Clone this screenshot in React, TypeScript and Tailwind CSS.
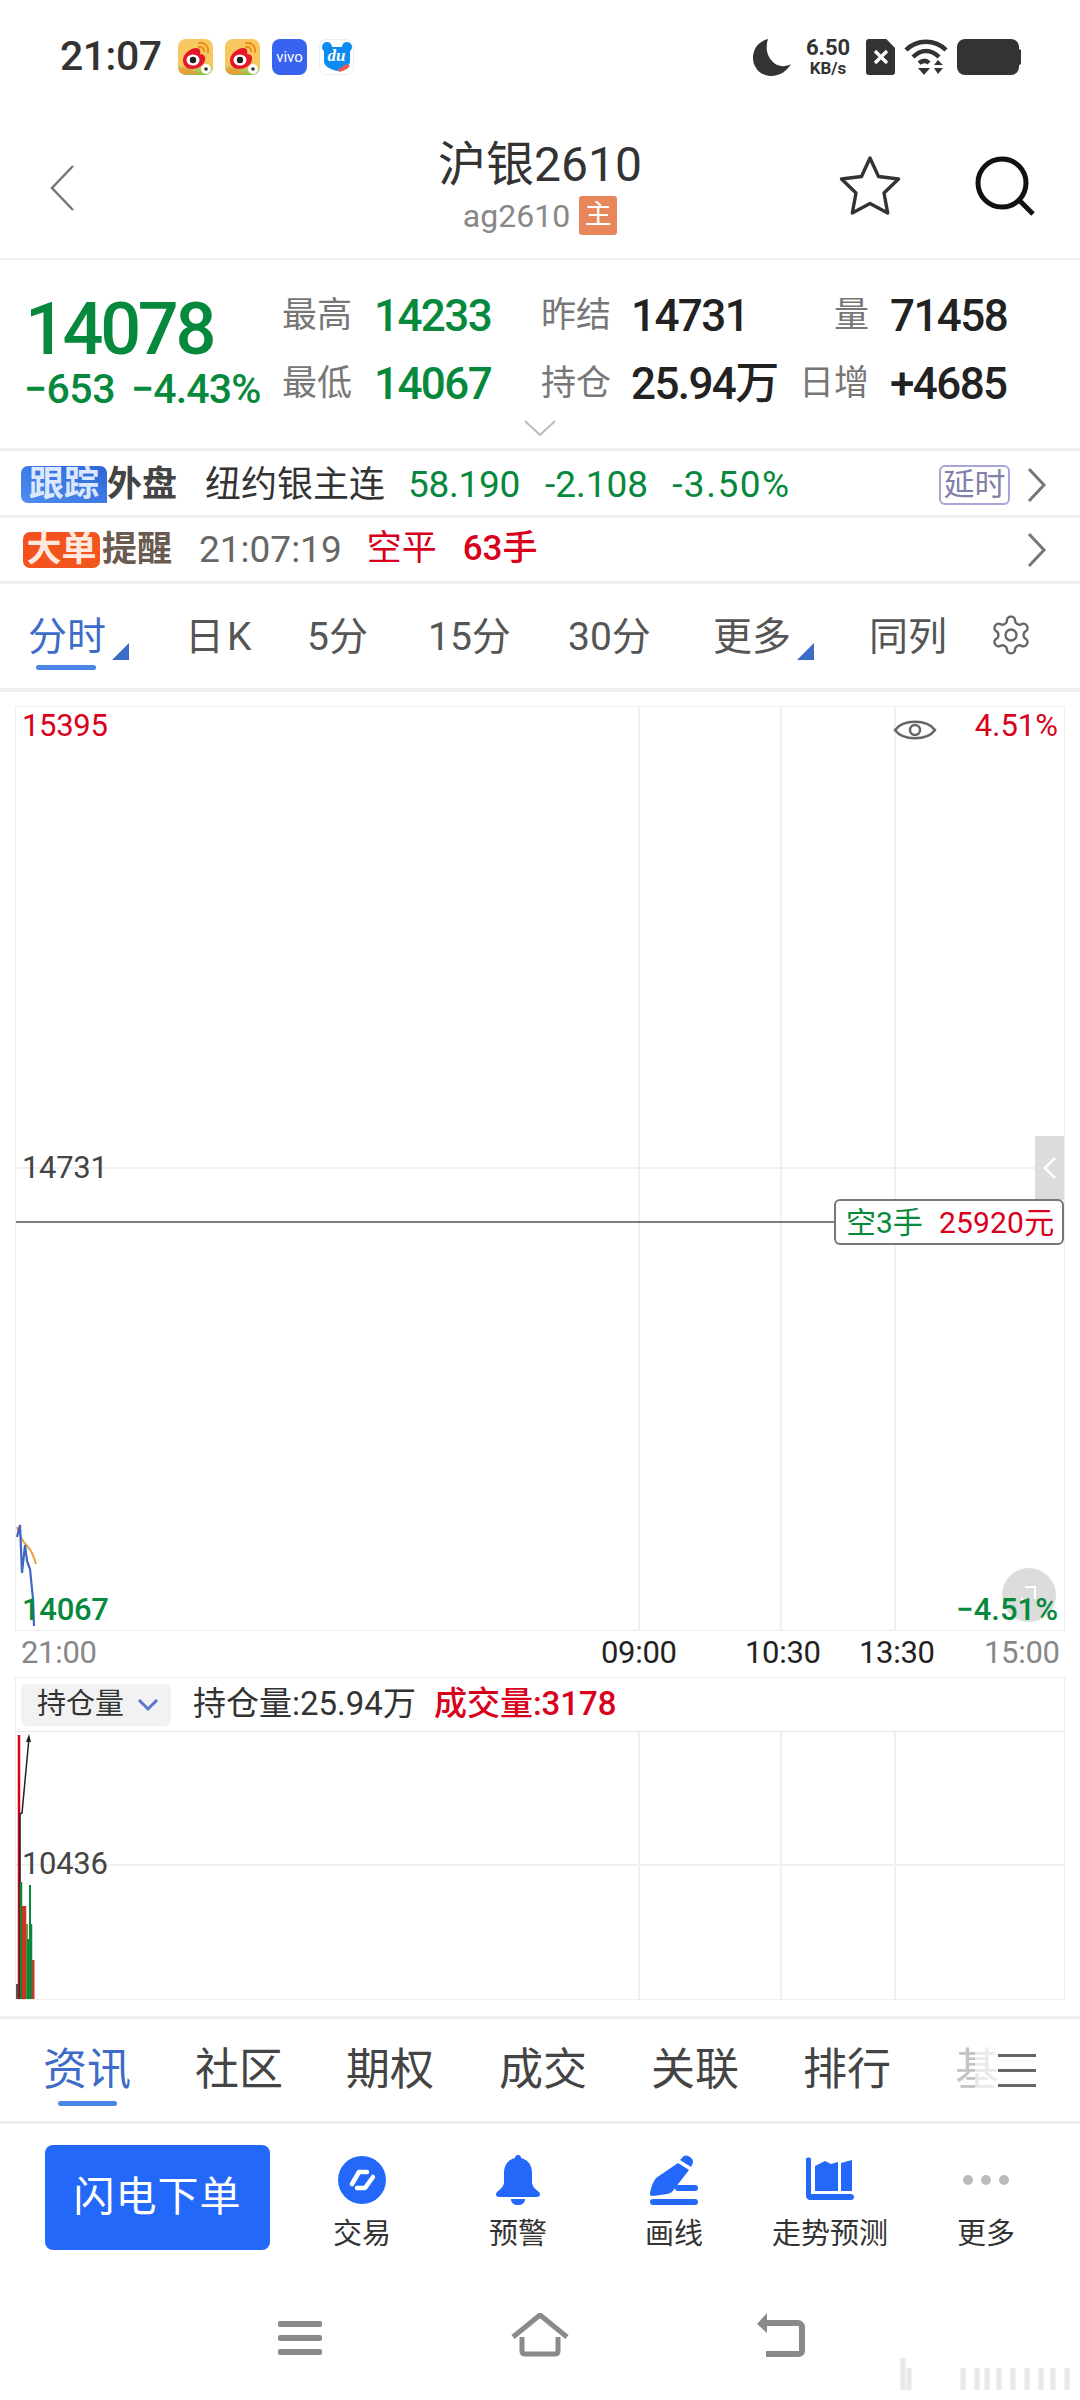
const GREEN = "text-[#07893d]";
const RED = "text-[#d9001b]";

function AppIcon({ kind }: { kind: "weibo" | "vivo" | "du" }) {
  if (kind === "vivo") {
    return (
      <div className="w-[35px] h-[36px] rounded-[8px] bg-[#3763f0] flex items-center justify-center text-white text-[15px] leading-none">
        vivo
      </div>
    );
  }
  if (kind === "du") {
    return (
      <div className="w-[35px] h-[36px] rounded-[8px] bg-white border border-[#e8eef5] flex items-center justify-center relative">
        <svg width="32" height="32" viewBox="0 0 32 32" className="absolute left-[1px] top-[1px]">
          <circle cx="6" cy="6" r="5" fill="#0c8bf0" />
          <circle cx="26" cy="6" r="5" fill="#0c8bf0" />
          <path d="M3 6h26v14c0 5-5 8-13 10C8 28 3 25 3 20z" fill="#0c8bf0" />
          <path d="M18 31c4-1 9-3 11-6l-3-2-9 5z" fill="#e65a4f" />
        </svg>
        <span className="relative text-white text-[17px] leading-none italic font-bold [font-family:'Liberation_Serif',serif] -mt-[3px]">du</span>
      </div>
    );
  }
  return (
    <div className="w-[35px] h-[36px] rounded-[8px] bg-gradient-to-b from-[#f8c860] from-70% to-[#7fc04a] flex items-center justify-center relative overflow-hidden">
      <svg width="35" height="36" viewBox="0 0 35 36">
        <path d="M0 30c8-4 14 2 22 5H0z" fill="#e8a13a" />
        <path d="M5 21c0-6 8-12 13-12 4 0 5 3 4 6 4 0 6 3 5 6-1 6-8 9-13 9-5 0-9-3-9-9z" fill="#e6162d" />
        <ellipse cx="15" cy="21" rx="6.500" ry="5.500" fill="#fff" />
        <circle cx="15" cy="21" r="3.200" fill="#222" />
        <path d="M21 4c5-1 10 3 9 9M21 8c3-.5 5 1 5 4" stroke="#ef8a17" strokeWidth="2" fill="none" strokeLinecap="round" />
        <circle cx="28" cy="30" r="5" fill="#fff" />
        <circle cx="28" cy="30" r="1.800" fill="#333" />
      </svg>
    </div>
  );
}

function StatusBar() {
  return (
    <div className="h-[114px] pl-[60px] pr-[61px] flex items-center justify-between">
      <div className="flex items-center">
        <span className="text-[41px] font-medium text-[#333] w-[118px] tracking-[-0.5px]">21:07</span>
        <div className="flex gap-[12px]">
          <AppIcon kind="weibo" />
          <AppIcon kind="weibo" />
          <AppIcon kind="vivo" />
          <AppIcon kind="du" />
        </div>
      </div>
      <div className="flex items-center text-[#333]">
        <svg width="38" height="37" viewBox="0 0 38 37" className="mr-[13px]">
          <path d="M15 0C4 3 0 11 0 19c0 10 8 18 18 18 9 0 16-5 20-12-5 3-12 3-17-1C14 18 12 9 15 0z" fill="#333" />
        </svg>
        <div className="w-[48px] flex flex-col items-center leading-none font-medium mr-[14px]">
          <span className="text-[22px] leading-[22px] font-bold">6.50</span>
          <span className="text-[17px] leading-[18px] font-bold">KB/s</span>
        </div>
        <div className="w-[29px] h-[36px] bg-[#333] rounded-[3px] [clip-path:polygon(0_0,70%_0,100%_25%,100%_100%,0_100%)] flex items-center justify-center mr-[9px]">
          <svg width="16" height="16" viewBox="0 0 16 16">
            <path d="M2 2l12 12M14 2 2 14" stroke="#fff" strokeWidth="3.200" />
          </svg>
        </div>
        <svg width="44" height="38" viewBox="0 0 44 38" className="mr-[9px]">
          <path d="M2 12C13 1 31 1 42 12M9 19c8-8 18-8 26 0M15 25c4-3 7-3 10 0" stroke="#333" strokeWidth="4.500" fill="none" />
          <path d="M14 30h12l-6 7zM30 27l4-5 5 5zM30 30h9l-5 6z" fill="#333" />
        </svg>
        <div className="w-[62px] h-[36px] bg-[#333] rounded-[8px] relative">
          <div className="absolute right-[-2px] top-[10px] w-[3px] h-[16px] rounded-r-[2px] bg-[#333]" />
        </div>
      </div>
    </div>
  );
}

function Header() {
  return (
    <div className="h-[146px] border-b-[2px] border-[#eeeeee] flex items-center relative">
      <div className="w-[340px] pl-[49px] pt-[4px]">
        <svg width="26" height="48" viewBox="0 0 26 48">
          <path d="M24 2 3 24l21 22" stroke="#777" strokeWidth="2.500" fill="none" />
        </svg>
      </div>
      <div className="w-[400px] flex flex-col items-center">
        <div className="text-[48px] leading-[56px] text-[#333]">沪银2610</div>
        <div className="flex items-center mt-[3px]">
          <span className="text-[32px] leading-[40px] text-[#888]">ag2610</span>
          <span className="ml-[9px] w-[38px] h-[39px] rounded-[3px] bg-[#e8875a] text-white text-[27px] leading-[39px] text-center">主</span>
        </div>
      </div>
      <div className="flex-1 flex items-center pl-[99px]">
        <svg width="62" height="62" viewBox="0 0 62 62">
          <path d="M31 3l8.500 18.500 20 2.500-14.500 14 3.700 20L31 48.500 13.300 58 17 38 2.500 24l20-2.500z" stroke="#333" strokeWidth="3.400" fill="none" strokeLinejoin="round" />
        </svg>
        <svg width="62" height="62" viewBox="0 0 62 62" className="ml-[73px]">
          <circle cx="28" cy="28" r="24" stroke="#111" strokeWidth="5" fill="none" />
          <path d="M46 46l13 13" stroke="#111" strokeWidth="5" />
        </svg>
      </div>
    </div>
  );
}

function Stat({ label, value, color, narrow, gap = "ml-[22px]" }: { label: string; value: string; color: string; narrow?: boolean; gap?: string }) {
  return (
    <div className="flex items-center h-[46px]">
      <span className={`text-[35px] text-[#777] text-right ${narrow ? "w-[86px]" : "w-[70px]"}`}>{label}</span>
      <span className={`text-[44px] font-medium tracking-[-1.600px] whitespace-nowrap ${gap} ${color}`}>{value}</span>
    </div>
  );
}

function Quote() {
  return (
    <div className="h-[188px] relative flex">
      <div className="w-[283px] pl-[25px] pt-[34px]">
        <div className={`text-[72px] leading-[72px] font-medium tracking-[-3.300px] ${GREEN}`}>14078</div>
        <div className={`text-[41px] leading-[46px] font-medium whitespace-nowrap -ml-[1px] ${GREEN}`}>
          <span className="tracking-[-0.5px]">−653</span>
          <span className="ml-[16px] tracking-[-0.8px]">−4.43%</span>
        </div>
      </div>
      <div className="w-[259px] pt-[33px] flex flex-col gap-[22px] -ml-[1px]">
        <Stat label="最高" value="14233" color={GREEN} />
        <Stat label="最低" value="14067" color={GREEN} />
      </div>
      <div className="w-[260px] pt-[33px] flex flex-col gap-[22px]">
        <Stat label="昨结" value="14731" color="text-[#222]" gap="ml-[20px]" />
        <Stat label="持仓" value="25.94万" color="text-[#222]" gap="ml-[20px]" />
      </div>
      <div className="pt-[33px] flex flex-col gap-[22px] -ml-[18px]">
        <Stat label="量" value="71458" color="text-[#222]" narrow gap="ml-[21px]" />
        <Stat label="日增" value="+4685" color="text-[#222]" narrow gap="ml-[21px]" />
      </div>
      <svg width="32" height="16" viewBox="0 0 32 16" className="absolute left-[524px] top-[160px]">
        <path d="M1 1l15 14L31 1" stroke="#bbb" strokeWidth="2" fill="none" />
      </svg>
    </div>
  );
}

function Chevron() {
  return (
    <svg width="20" height="36" viewBox="0 0 20 36">
      <path d="M2 2l15 16L2 34" stroke="#777" strokeWidth="3" fill="none" />
    </svg>
  );
}

function InfoRows() {
  return (
    <>
      <div className="h-[70px] border-y-[3px] border-[#eeeeee] flex items-center pl-[21px] pr-[33px] pt-[3px]">
        <span className="w-[86px] h-[37px] rounded-[7px] rounded-br-none bg-gradient-to-tr from-[#4f8df0] to-[#2b66d6] text-[#dbe8ff] text-[35px] font-bold leading-[37px] text-center">跟踪</span>
        <span className="w-[71px] text-[35px] font-bold leading-[37px] text-[#444]">外盘</span>
        <span className="ml-[27px] text-[36px] text-[#333]">纽约银主连</span>
        <span className={`ml-[23px] text-[37px] tracking-[-0.3px] ${GREEN}`}>58.190</span>
        <span className={`ml-[25px] text-[37px] ${GREEN}`}>-2.108</span>
        <span className={`ml-[24px] text-[37px] tracking-[1.500px] ${GREEN}`}>-3.50%</span>
        <span className="ml-auto w-[71px] h-[40px] border-2 border-[#a6a6d8] rounded-[6px] text-[#8080a8] text-[31px] leading-[36px] text-center">延时</span>
        <span className="ml-[17px] flex"><Chevron /></span>
      </div>
      <div className="h-[66px] border-b-[3px] border-[#eeeeee] flex items-center pl-[23px] pr-[33px]">
        <span className="w-[77px] h-[36px] rounded-[7px] bg-gradient-to-br from-[#f5501e] to-[#f0561c] text-[#ffe9de] text-[35px] font-bold leading-[36px] text-center">大单</span>
        <span className="w-[71px] ml-[2px] text-[35px] font-bold leading-[36px] text-[#6b5a50]">提醒</span>
        <span className="ml-[26px] text-[37px] text-[#666]">21:07:19</span>
        <span className={`ml-[25px] text-[35px] ${RED}`}>空平</span>
        <span className={`ml-[26px] text-[35px] font-medium ${RED}`}>63手</span>
        <span className="ml-auto flex"><Chevron /></span>
      </div>
    </>
  );
}

function PeriodTabs() {
  return (
    <div className="h-[108px] border-b-[4px] border-[#eeeeee] relative text-[39px] leading-[50px] text-[#555]">
      <div className="absolute left-[28px] top-[28px] text-[#3d6cc8]">分时</div>
      <div className="absolute left-[36px] top-[81px] w-[60px] h-[5px] rounded-full bg-[#4a86e8]" />
      <div className="absolute left-[112px] top-[59px] w-[17px] h-[17px] bg-[#3d6cc8] [clip-path:polygon(100%_0,100%_100%,0_100%)]" />
      <div className="absolute left-[185px] top-[28px] tracking-[3px]">日K</div>
      <div className="absolute left-[307px] top-[28px]">5分</div>
      <div className="absolute left-[428px] top-[28px]">15分</div>
      <div className="absolute left-[568px] top-[28px]">30分</div>
      <div className="absolute left-[713px] top-[28px]">更多</div>
      <div className="absolute left-[797px] top-[59px] w-[17px] h-[17px] bg-[#3d6cc8] [clip-path:polygon(100%_0,100%_100%,0_100%)]" />
      <div className="absolute left-[869px] top-[28px]">同列</div>
      <svg width="44" height="44" viewBox="0 0 24 24" className="absolute left-[989px] top-[29px]" fill="none" stroke="#666" strokeWidth="1.300">
        <path d="M12.220 2h-.44a2 2 0 0 0-2 2v.18a2 2 0 0 1-1 1.730l-.43.25a2 2 0 0 1-2 0l-.15-.08a2 2 0 0 0-2.730.73l-.22.38a2 2 0 0 0 .73 2.730l.15.1a2 2 0 0 1 1 1.720v.51a2 2 0 0 1-1 1.740l-.15.09a2 2 0 0 0-.73 2.730l.22.38a2 2 0 0 0 2.730.73l.15-.08a2 2 0 0 1 2 0l.43.25a2 2 0 0 1 1 1.730V20a2 2 0 0 0 2 2h.44a2 2 0 0 0 2-2v-.18a2 2 0 0 1 1-1.730l.43-.25a2 2 0 0 1 2 0l.15.08a2 2 0 0 0 2.730-.73l.22-.39a2 2 0 0 0-.73-2.730l-.15-.08a2 2 0 0 1-1-1.740v-.5a2 2 0 0 1 1-1.740l.15-.09a2 2 0 0 0 .73-2.730l-.22-.38a2 2 0 0 0-2.730-.73l-.15.08a2 2 0 0 1-2 0l-.43-.25a2 2 0 0 1-1-1.730V4a2 2 0 0 0-2-2z" />
        <circle cx="12" cy="12" r="3" />
      </svg>
    </div>
  );
}

function MainChart() {
  return (
    <div className="relative ml-[15px] mt-[14px] w-[1050px] h-[925px] border border-[#eeeeee]">
      <svg width="1048" height="923" viewBox="0 0 1048 923" className="absolute left-0 top-0">
        <path d="M0 461h1048M623 0v923M765 0v923M879 0v923" stroke="#f0f0f0" strokeWidth="2" fill="none" />
        <path d="M0 515h820" stroke="#555" strokeWidth="1.500" />
        <path d="M1 820c2 7 6 15 11 20 4 4 6 10 8 17" stroke="#e8a33d" strokeWidth="2" fill="none" />
        <path d="M1 830l3-12 2 48 3-28 2 16 3 8 3 30 1 27" stroke="#3f67c4" strokeWidth="2.200" fill="none" />
      </svg>
      <span className={`absolute left-[6px] top-[1px] text-[31px] leading-[36px] tracking-[-0.3px] ${RED}`}>15395</span>
      <span className={`absolute right-[6px] top-[1px] text-[31px] leading-[36px] ${RED}`}>4.51%</span>
      <svg width="44" height="30" viewBox="0 0 44 30" className="absolute left-[877px] top-[8px]">
        <path d="M2 15C10 4 34 4 42 15 34 26 10 26 2 15z" stroke="#666" strokeWidth="2.500" fill="none" />
        <circle cx="22" cy="15" r="5" stroke="#666" strokeWidth="2.500" fill="none" />
      </svg>
      <span className="absolute left-[6px] top-[443px] text-[31px] leading-[36px] tracking-[-0.3px] text-[#444]">14731</span>
      <div className="absolute right-0 top-[429px] w-[29px] h-[64px] bg-[#dcdcdc] flex items-center justify-center">
        <svg width="14" height="24" viewBox="0 0 14 24">
          <path d="M12 2 2 12l10 10" stroke="#fff" strokeWidth="2.500" fill="none" />
        </svg>
      </div>
      <div className="absolute right-0 top-[492px] w-[230px] h-[46px] bg-white border-2 border-[#777] rounded-[6px] flex items-center pl-[10px] text-[30px] whitespace-nowrap">
        <span className={GREEN}>空3手</span>
        <span className={`ml-[16px] tracking-[0.2px] ${RED}`}>25920元</span>
      </div>
      <div className="absolute left-[986px] top-[861px] w-[54px] h-[54px] rounded-full bg-[#dcdcdc] flex items-center justify-center">
        <svg width="24" height="24" viewBox="0 0 24 24">
          <path d="M8 4h10v12M4 16h2" stroke="#fff" strokeWidth="2" fill="none" />
        </svg>
      </div>
      <span className={`absolute left-[6px] top-[885px] text-[31px] leading-[36px] font-medium tracking-[-0.3px] ${GREEN}`}>14067</span>
      <span className={`absolute right-[6px] top-[885px] text-[31px] leading-[36px] font-medium ${GREEN}`}>−4.51%</span>
    </div>
  );
}

function TimeAxis() {
  return (
    <div className="h-[46px] relative text-[31px] leading-[36px] tracking-[-0.3px]">
      <span className="absolute left-[21px] top-[4px] text-[#888]">21:00</span>
      <span className="absolute left-[601px] top-[4px] text-[#222]">09:00</span>
      <span className="absolute left-[745px] top-[4px] text-[#222]">10:30</span>
      <span className="absolute left-[859px] top-[4px] text-[#222]">13:30</span>
      <span className="absolute left-[984px] top-[4px] text-[#888]">15:00</span>
    </div>
  );
}

function VolumeChart() {
  return (
    <div className="relative ml-[15px] w-[1050px] h-[323px] border border-[#eeeeee]">
      <div className="h-[54px] border-b border-[#e8e8e8] flex items-center pl-[5px]">
        <div className="w-[150px] h-[42px] rounded-[6px] bg-[#f2f2f2] flex items-center pl-[16px] text-[29px] text-[#333]">
          持仓量
          <svg width="22" height="14" viewBox="0 0 22 14" className="ml-[13px]">
            <path d="M2 2l9 9 9-9" stroke="#5a76cc" strokeWidth="3" fill="none" />
          </svg>
        </div>
        <span className="ml-[22px] text-[33px] text-[#333] whitespace-nowrap -mt-[2px]">持仓量:25.94万</span>
        <span className={`ml-[18px] text-[33px] font-medium whitespace-nowrap -mt-[2px] ${RED}`}>成交量:3178</span>
      </div>
      <svg width="1048" height="267" viewBox="0 0 1048 267" className="absolute left-0 top-[54px]">
        <path d="M0 133h1048M623 0v267M765 0v267M879 0v267" stroke="#f0f0f0" strokeWidth="2" fill="none" />
        <path d="M3 3v264" stroke="#d9001b" strokeWidth="2.500" />
        <path d="M1 267v-15M4 267V82" stroke="#222" strokeWidth="1.500" />
        <path d="M5 267V150" stroke="#07893d" strokeWidth="2.500" />
        <path d="M4 82l2-1L13 6" stroke="#222" strokeWidth="1.500" fill="none" />
        <path d="M13 2l-3 8h5z" fill="#222" />
        <path d="M7 267v-93M9 267v-93" stroke="#c9361f" strokeWidth="2.500" />
        <path d="M11 267v-75" stroke="#8f8a3a" strokeWidth="2" />
        <path d="M12 267v-60M15 267v-75" stroke="#07893d" strokeWidth="2.500" />
        <path d="M14 267V153" stroke="#07893d" strokeWidth="2" />
        <path d="M17 267v-39" stroke="#b8402a" strokeWidth="3" />
      </svg>
      <span className="absolute left-[6px] top-[168px] text-[31px] leading-[36px] tracking-[-0.3px] text-[#444]">10436</span>
    </div>
  );
}

function InfoTabs() {
  return (
    <div className="mt-[16px] h-[108px] border-y-[3px] border-[#eeeeee] relative text-[44px] leading-[60px] text-[#444]">
      <span className="absolute left-[43px] top-[21px] text-[#3d6cc8]">资讯</span>
      <div className="absolute left-[58px] top-[82px] w-[59px] h-[5px] rounded-full bg-[#4a86e8]" />
      <span className="absolute left-[195px] top-[21px]">社区</span>
      <span className="absolute left-[346px] top-[21px]">期权</span>
      <span className="absolute left-[499px] top-[21px]">成交</span>
      <span className="absolute left-[651px] top-[21px]">关联</span>
      <span className="absolute left-[803px] top-[21px]">排行</span>
      <span className="absolute left-[955px] top-[21px] text-[#c4c4c4]">基</span>
      <div className="absolute left-[975px] top-0 w-[105px] h-[100px] bg-gradient-to-r from-white/60 to-white" />
      <div className="absolute left-[998px] top-[35px] w-[38px] flex flex-col gap-[12px]">
        <div className="h-[3px] bg-[#666]" />
        <div className="h-[3px] bg-[#666]" />
        <div className="h-[3px] bg-[#666]" />
      </div>
    </div>
  );
}

function ToolItem({ label, children }: { label: string; children: React.ReactNode }) {
  return (
    <div className="w-[156px] flex flex-col items-center">
      <div className="h-[52px] flex items-center justify-center">{children}</div>
      <span className="mt-[10px] text-[29px] leading-[36px] text-[#333] whitespace-nowrap">{label}</span>
    </div>
  );
}

function Toolbar() {
  return (
    <div className="h-[172px] flex items-start pt-[21px] pl-[45px]">
      <div className="w-[225px] h-[105px] rounded-[8px] bg-[#2468fa] text-white text-[41px] tracking-[1px] flex items-center justify-center">
        闪电下单
      </div>
      <div className="flex ml-[14px] pt-[9px]">
        <ToolItem label="交易">
          <svg width="48" height="48" viewBox="0 0 48 48">
            <circle cx="24" cy="24" r="24" fill="#2468fa" />
            <path d="M29 16H21L14 28M35 21 27 32H19" stroke="#fff" strokeWidth="4.500" strokeLinecap="round" strokeLinejoin="round" fill="none" />
          </svg>
        </ToolItem>
        <ToolItem label="预警">
          <svg width="46" height="50" viewBox="0 0 46 50">
            <path d="M23 0c2 0 3 1 3 3 8 2 11 8 11 15v9c0 4 3 7 7 10 2 2 1 5-2 5H4c-3 0-4-3-2-5 4-3 7-6 7-10v-9C9 11 12 5 20 3c0-2 1-3 3-3z" fill="#2468fa" />
            <path d="M16 44h14c0 4-3 6-7 6s-7-2-7-6z" fill="#2468fa" />
          </svg>
        </ToolItem>
        <ToolItem label="画线">
          <svg width="48" height="50" viewBox="0 0 48 50">
            <path d="M32 3c2-3 5-3 8-1s4 5 2 8l-1 2-11-7z" fill="#2468fa" />
            <path d="M28 8l11 7-17 22c-4 3-14 3-20 4-2 0-2-2-2-3 1-6 3-11 6-15z" fill="#2468fa" />
            <rect x="25" y="30" width="23" height="6" rx="3" fill="#2468fa" />
            <rect x="0" y="44" width="48" height="6" rx="3" fill="#2468fa" />
          </svg>
        </ToolItem>
        <ToolItem label="走势预测">
          <svg width="48" height="46" viewBox="0 0 48 46">
            <path d="M0 2c0-2 5-2 5 0v35h40c4 0 4 6 0 6H4c-2 0-4-2-4-4z" fill="#2468fa" />
            <path d="M9 9l10-5 6 3 7-2v29H9z" fill="#2468fa" />
            <path d="M35 6l11-3v31H35z" fill="#2468fa" />
          </svg>
        </ToolItem>
        <ToolItem label="更多">
          <div className="flex gap-[8px]">
            <div className="w-[10px] h-[10px] rounded-full bg-[#bbb]" />
            <div className="w-[10px] h-[10px] rounded-full bg-[#bbb]" />
            <div className="w-[10px] h-[10px] rounded-full bg-[#bbb]" />
          </div>
        </ToolItem>
      </div>
    </div>
  );
}

function NavBar() {
  return (
    <div className="h-[104px] relative">
      <div className="absolute left-[278px] top-[25px] w-[44px] flex flex-col gap-[8px]">
        <div className="h-[6px] rounded-[2px] bg-[#8a8a8a]" />
        <div className="h-[6px] rounded-[2px] bg-[#8a8a8a]" />
        <div className="h-[6px] rounded-[2px] bg-[#8a8a8a]" />
      </div>
      <svg width="58" height="44" viewBox="0 0 58 44" className="absolute left-[511px] top-[17px]">
        <path d="M2 24 29 2l27 22" stroke="#8a8a8a" strokeWidth="5" fill="none" strokeLinejoin="round" />
        <path d="M11 24v14c0 2 1 3 3 3h30c2 0 3-1 3-3V24" stroke="#8a8a8a" strokeWidth="5" fill="none" />
      </svg>
      <svg width="50" height="44" viewBox="0 0 50 44" className="absolute left-[755px] top-[17px]">
        <path d="M7 10h36c2 0 4 2 4 4v24c0 2-2 3-4 3H11" stroke="#8a8a8a" strokeWidth="6" fill="none" />
        <path d="M12 0v20L2 11z" fill="#8a8a8a" />
      </svg>
      <svg width="180" height="40" viewBox="0 0 180 40" className="absolute left-[895px] top-[58px]">
        <path d="M8 36V4M14 36V14M68 36V14M82 36V14M92 36V14M104 36V14M118 36V14M132 36V14M146 36V14M158 36V14M172 36V14" stroke="#e8e8e8" strokeWidth="5" />
      </svg>
    </div>
  );
}

export default function App() {
  return (
    <div className="w-[1080px] h-[2400px] bg-white overflow-hidden [font-family:Roboto,'Noto_Sans_CJK_SC',sans-serif]">
      <StatusBar />
      <Header />
      <Quote />
      <InfoRows />
      <PeriodTabs />
      <MainChart />
      <TimeAxis />
      <VolumeChart />
      <InfoTabs />
      <Toolbar />
      <NavBar />
    </div>
  );
}
